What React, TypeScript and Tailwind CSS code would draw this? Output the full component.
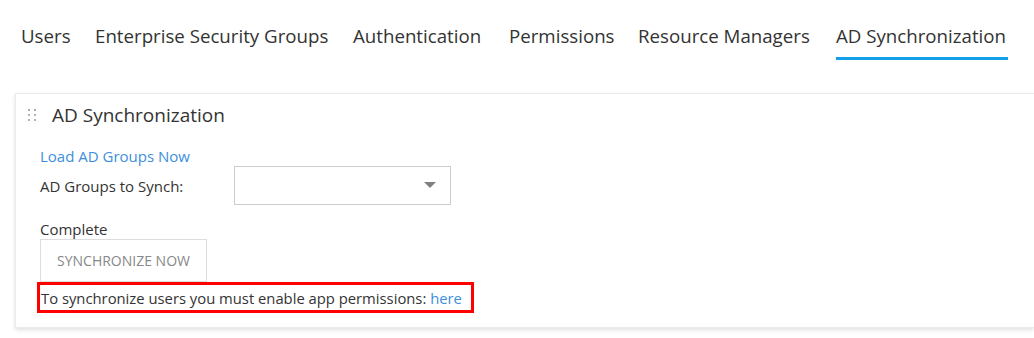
import React from "react";

const tabs: { label: string; w: string }[] = [
  { label: "Users", w: "w-[47px]" },
  { label: "Enterprise Security Groups", w: "w-[231px]" },
  { label: "Authentication", w: "w-[129px]" },
  { label: "Permissions", w: "w-[102px]" },
  { label: "Resource Managers", w: "w-[171px]" },
  { label: "AD Synchronization", w: "w-[172px]" },
];

export default function App() {
  return (
    <div
      className="w-[1034px] h-[338px] bg-white overflow-hidden text-[#333333]"
      style={{ fontFamily: '"Open Sans", "Noto Sans", sans-serif' }}
    >
      <div className="flex gap-[27px] pl-[21px] pt-[22px]">
        {tabs.map((t, i) => (
          <div
            key={t.label}
            className={
              t.w +
              " text-[18.7px] leading-[28px] pb-[7px] border-b-[3px] whitespace-nowrap " +
              (i === tabs.length - 1 ? "border-[#14a0e6]" : "border-transparent")
            }
          >
            {t.label}
          </div>
        ))}
      </div>
      <div className="ml-[15px] mt-[33px] h-[235px] border border-[#ebebeb] border-r-0 shadow-[0_2px_4px_rgba(0,0,0,0.12)] bg-white">
        <div className="flex items-center pl-[11px] pt-[8px]">
          <svg width="10" height="14" viewBox="0 0 10 14" className="mr-[15px] mt-[1px]">
            {[1, 6, 11].map((y) =>
              [2, 8].map((x) => (
                <circle key={x + "-" + y} cx={x} cy={y} r="1.1" fill="#a0a0a0" />
              ))
            )}
          </svg>
          <div className="text-[19px] leading-[26px]">AD Synchronization</div>
        </div>
        <div className="pl-[24px] text-[15px]">
          <div className="mt-[18px] text-[#3d8fdc] leading-[20px]">Load AD Groups Now</div>
          <div className="flex items-center">
            <div className="w-[194px] leading-[20px] mt-[1px]">AD Groups to Synch:</div>
            <div className="w-[217px] h-[39px] border border-[#cccccc] flex items-center justify-end pr-[14px]">
              <svg width="12" height="7" viewBox="0 0 12 7">
                <path d="M0 0 L12 0 L6 6 Z" fill="#808080" />
              </svg>
            </div>
          </div>
          <div className="mt-[14px] leading-[20px]">Complete</div>
          <div className="w-[167px] h-[43px] border border-[#dddddd] flex items-center justify-center text-[14px] text-[#888888]">
            SYNCHRONIZE NOW
          </div>
          <div className="-ml-[3px] w-[437px] h-[31px] border-[3px] border-[#ff0000] flex items-center pl-[1px] leading-[20px] whitespace-nowrap text-[14.8px]">
            To synchronize users you must enable app permissions:&nbsp;
            <span className="text-[#3d8fdc]">here</span>
          </div>
        </div>
      </div>
    </div>
  );
}
